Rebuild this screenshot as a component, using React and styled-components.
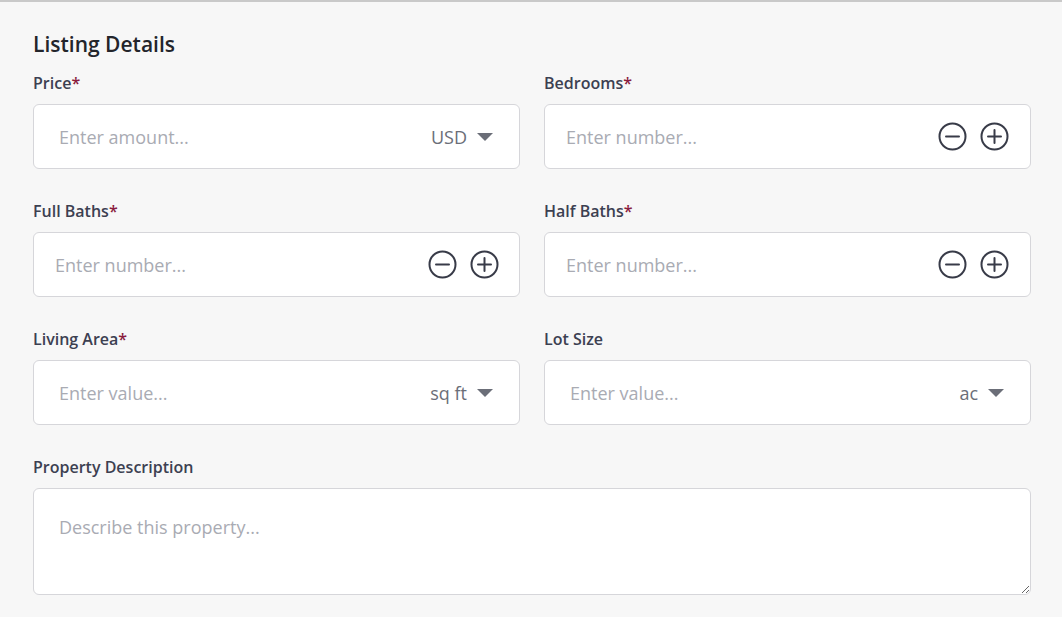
import React from "react";
import styled, { createGlobalStyle } from "styled-components";

const Global = createGlobalStyle`
  html, body {
    margin: 0;
    padding: 0;
    background: #f7f7f7;
  }
  * {
    box-sizing: border-box;
  }
`;

const Page = styled.div`
  width: 1062px;
  height: 617px;
  background: #f7f7f7;
  border-top: 2px solid #c9c9c9;
  padding: 28px 30px 0 33px;
  font-family: "Open Sans", "Noto Sans", sans-serif;
  overflow: hidden;
`;

const Title = styled.h2`
  margin: 0 0 14px;
  font-size: 21px;
  font-weight: 600;
  color: #23252b;
  line-height: 28px;
`;

const Grid = styled.div`
  display: grid;
  grid-template-columns: 487px 487px;
  column-gap: 24px;
  row-gap: 31px;
`;

const Field = styled.div`
  display: flex;
  flex-direction: column;
  gap: 10px;
  grid-column: ${(p) => (p.$wide ? "1 / -1" : "auto")};
`;

const Label = styled.label`
  font-size: 16px;
  font-weight: 600;
  color: #3c4051;
  line-height: 22px;
  span {
    color: #8a1c3e;
  }
`;

const Box = styled.div`
  height: 65px;
  background: #fff;
  border: 1px solid #d6d6da;
  border-radius: 6px;
  display: flex;
  align-items: center;
  padding: 0 ${(p) => p.$right}px 0 ${(p) => p.$left}px;
`;

const Input = styled.input`
  flex: 1;
  min-width: 0;
  border: none;
  outline: none;
  background: transparent;
  font-family: inherit;
  font-size: 18px;
  color: #23252b;
  &::placeholder {
    color: #a9abb3;
  }
`;

const Unit = styled.div`
  display: flex;
  align-items: center;
  gap: 10px;
  font-size: 18px;
  color: #6b6e78;
`;

const Caret = styled.span`
  width: 0;
  height: 0;
  border-left: 8px solid transparent;
  border-right: 8px solid transparent;
  border-top: 8px solid #6b6e78;
`;

const Stepper = styled.div`
  display: flex;
  gap: 13px;
`;

const StepButton = styled.button`
  width: 29px;
  height: 29px;
  padding: 0;
  border: none;
  background: none;
  display: flex;
  cursor: pointer;
  color: #383b48;
`;

const TextArea = styled.textarea`
  height: 107px;
  resize: vertical;
  background: #fff;
  border: 1px solid #d6d6da;
  border-radius: 6px;
  padding: 26px 25px;
  font-family: inherit;
  font-size: 18px;
  outline: none;
  &::placeholder {
    color: #a9abb3;
  }
`;

const CircleIcon = ({ plus }) => (
  <svg width="29" height="29" viewBox="0 0 29 29" fill="none" stroke="currentColor" strokeWidth="2" strokeLinecap="round">
    <circle cx="14.5" cy="14.5" r="13" />
    <line x1="8" y1="14.5" x2="21" y2="14.5" />
    {plus && <line x1="14.5" y1="8" x2="14.5" y2="21" />}
  </svg>
);

const Req = ({ children, required }) => (
  <Label>
    {children}
    {required && <span>*</span>}
  </Label>
);

const UnitField = ({ label, required, placeholder, unit }) => (
  <Field>
    <Req required={required}>{label}</Req>
    <Box $left={23} $right={26}>
      <Input placeholder={placeholder} />
      <Unit>
        {unit}
        <Caret />
      </Unit>
    </Box>
  </Field>
);

const StepField = ({ label, required, right = 21 }) => (
  <Field>
    <Req required={required}>{label}</Req>
    <Box $left={19} $right={right}>
      <Input placeholder="Enter number..." />
      <Stepper>
        <StepButton aria-label="decrease">
          <CircleIcon />
        </StepButton>
        <StepButton aria-label="increase">
          <CircleIcon plus />
        </StepButton>
      </Stepper>
    </Box>
  </Field>
);

export default function App() {
  return (
    <Page>
      <Global />
      <Title>Listing Details</Title>
      <Grid>
        <UnitField label="Price" required placeholder="Enter amount..." unit="USD" />
        <StepField label="Bedrooms" required />
        <StepField label="Full Baths" required right={20} />
        <StepField label="Half Baths" required />
        <UnitField label="Living Area" required placeholder="Enter value..." unit="sq ft" />
        <UnitField label="Lot Size" placeholder="Enter value..." unit="ac" />
        <Field $wide>
          <Label>Property Description</Label>
          <TextArea placeholder="Describe this property..." />
        </Field>
      </Grid>
    </Page>
  );
}
